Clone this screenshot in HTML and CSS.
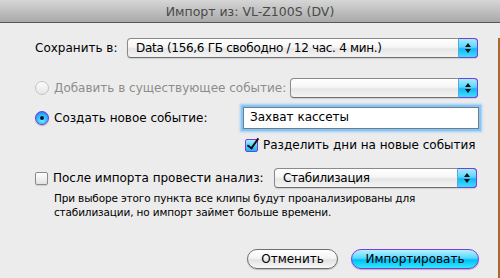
FILE: index.html
```html
<!DOCTYPE html>
<html>
<head>
    <meta charset="utf-8">
    <title>Импорт из: VL-Z100S (DV)</title>
    <link rel="stylesheet" href="styles.css">
</head>
<body>
<div class="window">
    <div class="titlebar">Импорт из: VL-Z100S (DV)</div>
    <div class="content">
        <div class="row row-save">
            <span class="label w-save">Сохранить в:</span>
            <div class="popup w-popup1"><span>Data (156,6 ГБ свободно / 12 час. 4 мин.)</span><i class="arrows"></i></div>
        </div>
        <div class="row row-add">
            <span class="radio disabled"></span>
            <span class="label dim">Добавить в существующее событие:</span>
            <div class="popup w-popup2"><span></span><i class="arrows"></i></div>
        </div>
        <div class="row row-new">
            <span class="radio on"></span>
            <span class="label">Создать новое событие:</span>
            <div class="field">Захват кассеты</div>
        </div>
        <div class="row row-split">
            <span class="check on"></span>
            <span class="label">Разделить дни на новые события</span>
        </div>
        <div class="row row-analyze">
            <span class="check"></span>
            <span class="label">После импорта провести анализ:</span>
            <div class="popup w-popup3"><span>Стабилизация</span><i class="arrows"></i></div>
        </div>
        <div class="note">При выборе этого пункта все клипы будут проанализированы для<br>стабилизации, но импорт займет больше времени.</div>
        <div class="buttons">
            <div class="btn cancel">Отменить</div>
            <div class="btn default">Импортировать</div>
        </div>
    </div>
</div>
</body>
</html>
```

FILE: styles.css
```css
body{margin:0;padding:0;background:#ececec;font-family:"DejaVu Sans",sans-serif;font-size:12px;color:#000;}
.window{width:500px;height:278px;overflow:hidden;background:#ececec;}
.titlebar{height:22px;line-height:23px;text-align:center;color:#4a4a4a;font-size:12.5px;background:linear-gradient(#d6d6d6,#a9a9a9);border-bottom:1px solid #565656;}
.content{height:254px;padding-left:35px;border-right:2px solid #a86a2c;box-sizing:border-box;width:500px;}

.row{display:flex;align-items:center;}
.row-save{margin-top:15px;height:20px;}
.row-add{margin-top:20px;height:20px;}
.row-new{margin-top:9px;height:22px;}
.row-split{margin-top:9px;height:14px;padding-left:210px;}
.row-analyze{margin-top:16px;height:20px;}

.label{white-space:nowrap;}
.dim{color:#8c8c8c;}
.w-save{width:92px;}
.radio + .label,.check + .label{padding-left:5px;}
.row-add .label{width:236px;}
.row-new .label{width:189px;}
.row-analyze .label{width:221px;}

.popup{position:relative;height:20px;box-sizing:border-box;border:1px solid #8a8a8a;border-bottom-color:#6e6e6e;border-radius:4px;background:linear-gradient(#ffffff 0%,#f6f6f6 45%,#e6e6e6 55%,#f4f4f4 100%);display:flex;align-items:center;box-shadow:0 1px 1px rgba(0,0,0,0.12);}
.popup span{flex:1;padding-left:8px;white-space:nowrap;overflow:hidden;letter-spacing:-0.3px;}
.w-popup1{width:351px;}
.w-popup2{width:188px;}
.w-popup3{width:203px;}
.arrows{display:block;position:relative;width:20px;height:20px;margin:-1px -1px -1px 0;box-sizing:border-box;border:1px solid #7b3ae6;border-left:1px solid #5aa8d8;border-radius:0 4px 4px 0;background:linear-gradient(#a4ecff 0%,#5fd4ff 45%,#11b8f5 55%,#3fe0ff 100%);}
.arrows:before,.arrows:after{content:"";position:absolute;left:6px;border-left:3px solid transparent;border-right:3px solid transparent;}
.arrows:before{top:4px;border-bottom:4px solid #111;}
.arrows:after{top:10px;border-top:4px solid #111;}

.radio{width:14px;height:14px;border-radius:50%;box-sizing:border-box;flex:none;}
.radio.disabled{border:1px solid #c4c4c4;background:linear-gradient(#fbfbfb,#e6e6e6);}
.radio.on{position:relative;border:1px solid #6a3ad8;background:radial-gradient(circle at 50% 70%,#6ef0ff 0%,#2fb4ff 55%,#2a5cf0 100%);box-shadow:0 1px 1px rgba(0,0,0,0.25);}
.radio.on:after{content:"";position:absolute;left:4px;top:4px;width:4px;height:4px;border-radius:50%;background:#0a1840;}

.check{position:relative;width:13px;height:13px;box-sizing:border-box;border-radius:2px;flex:none;}
.row-analyze .check{border:1px solid #8a8a8a;background:linear-gradient(#ffffff,#e2e2e2);box-shadow:0 1px 1px rgba(0,0,0,0.12);}
.check.on{border:1px solid #7b3ae6;background:linear-gradient(#a4ecff,#11b8f5);}
.check.on:after{content:"";position:absolute;left:4px;top:-4px;width:4px;height:11px;border-right:2.5px solid #111;border-bottom:2.5px solid #111;transform:rotate(35deg);}

.field{width:236px;height:22px;box-sizing:border-box;border:1px solid #7a7a7a;background:#fff;line-height:19px;padding-left:6px;box-shadow:0 0 0 2px #7fc8ff,0 0 2px 3px rgba(80,170,255,0.5);}

.note{margin-top:3px;padding-left:19px;font-size:10.5px;line-height:14px;letter-spacing:-0.15px;}

.buttons{display:flex;justify-content:flex-end;margin-top:30px;padding-right:19px;gap:13px;}
.btn{height:20px;box-sizing:border-box;border-radius:10px;text-align:center;line-height:18px;font-size:12px;}
.cancel{width:91px;border:1px solid #6e6e6e;background:linear-gradient(#ffffff 0%,#f4f4f4 45%,#e2e2e2 55%,#f8f8f8 100%);box-shadow:0 1px 1px rgba(0,0,0,0.2);}
.default{width:128px;border:1px solid #7b3ae6;background:linear-gradient(#b6f2ff 0%,#56d8ff 45%,#00bff8 55%,#33e8ff 100%);box-shadow:0 1px 1px rgba(0,0,0,0.25);}
```
